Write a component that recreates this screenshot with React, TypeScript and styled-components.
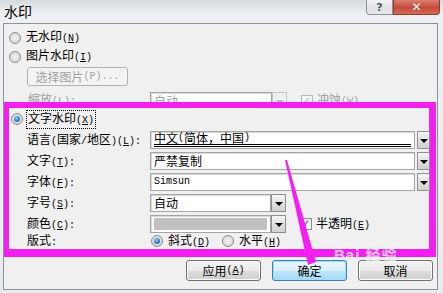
import React from 'react';
import styled, { createGlobalStyle } from 'styled-components';

const GlobalStyle = createGlobalStyle`
  body {
    margin: 0;
    background: #e4e8ec;
    font-family: "Noto Sans CJK SC", "Noto Sans", sans-serif;
  }
`;

const Window = styled.div`
  position: relative;
  width: 443px;
  height: 293px;
  overflow: hidden;
  background: linear-gradient(to bottom, #d6dadf 0px, #eef0f3 14px, #e9ecef 100%);
`;

const TitleBar = styled.div`
  display: flex;
  align-items: flex-start;
  height: 23px;
`;

const Title = styled.div`
  padding: 3px 0 0 4px;
  font-size: 14px;
  line-height: 17px;
  color: #000;
`;

const CaptionButtons = styled.div`
  display: flex;
  margin-left: auto;
  margin-right: 3px;
`;

const CaptionButton = styled.div<{ $close?: boolean }>`
  display: flex;
  align-items: center;
  justify-content: center;
  width: ${p => (p.$close ? 47 : 27)}px;
  height: 15px;
  box-sizing: border-box;
  border: 1px solid ${p => (p.$close ? '#8f3a2e' : '#8e9297')};
  border-top: none;
  border-radius: ${p => (p.$close ? '0 0 4px 0' : '0 0 0 4px')};
  background: ${p =>
    p.$close
      ? 'linear-gradient(to bottom, #d9806e, #c4493a 55%, #d46c58)'
      : 'linear-gradient(to bottom, #f4f5f7, #dfe2e6 55%, #e8eaed)'};
  color: ${p => (p.$close ? '#fff' : '#555')};
  font-family: "DejaVu Sans", sans-serif;
  font-size: ${p => (p.$close ? 12 : 11)}px;
  font-weight: bold;
  line-height: 1;
`;

const Client = styled.div`
  display: flex;
  flex-direction: column;
  box-sizing: border-box;
  height: 267px;
  margin: 0 5px 0 3px;
  border: 1px solid #8e9196;
  background: #f0f0f0;
  padding-top: 4px;
  font-size: 12px;
  line-height: 14px;
  color: #000;
`;

const OptionRow = styled.div<{ $indent?: number; $h?: number }>`
  display: flex;
  align-items: center;
  gap: 4px;
  height: ${p => p.$h ?? 19}px;
  padding-left: ${p => p.$indent ?? 5}px;
`;

const Radio = styled.span<{ $checked?: boolean }>`
  position: relative;
  flex: none;
  width: 12px;
  height: 12px;
  box-sizing: border-box;
  border-radius: 50%;
  border: 1px solid #8b8b8b;
  background: radial-gradient(circle at 50% 50%, #f4f4f4 0, #dadada 70%, #cfcfcf 100%);

  &::after {
    content: '';
    display: ${p => (p.$checked ? 'block' : 'none')};
    position: absolute;
    left: 2px;
    top: 2px;
    width: 6px;
    height: 6px;
    border-radius: 50%;
    background: radial-gradient(circle at 40% 35%, #8fd0f5 0, #1f7cc4 60%, #0e4f8a 100%);
  }
`;

const Check = styled.span<{ $disabled?: boolean }>`
  display: flex;
  align-items: center;
  justify-content: center;
  flex: none;
  width: 12px;
  height: 12px;
  box-sizing: border-box;
  border: 1px solid ${p => (p.$disabled ? '#b8b8b8' : '#8e8f8f')};
  background: ${p => (p.$disabled ? '#f4f4f4' : 'linear-gradient(#e6e6e6, #ffffff)')};
  color: ${p => (p.$disabled ? '#b0b0b0' : '#2a3f8f')};
  font-family: "DejaVu Sans", sans-serif;
  font-size: 10px;
  font-weight: bold;
  line-height: 1;
`;

const Text = styled.span<{ $muted?: boolean; $focus?: boolean; $after?: number }>`
  color: ${p => (p.$muted ? '#a0a0a0' : '#000')};
  white-space: nowrap;
  padding: 0 1px;
  margin-right: ${p => p.$after ?? 0}px;
  outline: ${p => (p.$focus ? '1px dotted #000' : 'none')};
`;

/* half-width run, to get the fixed 6px cell of the dialog font */
const Half = styled.span`
  font-family: "Liberation Mono", monospace;
  font-size: 10px;
`;

const Key = styled.span`
  text-decoration: underline;
`;

const PickButton = styled.div`
  display: flex;
  align-items: center;
  justify-content: center;
  width: 101px;
  height: 19px;
  box-sizing: border-box;
  margin: 1px 0 0 23px;
  border: 1px solid #adb2b5;
  border-radius: 3px;
  background: #f4f4f4;
  color: #a0a0a0;
`;

const ScaleRow = styled.div`
  display: flex;
  align-items: flex-start;
  height: 10px;
  margin-top: 6px;
  padding-left: 23px;
  overflow: hidden;
`;

const Highlight = styled.div`
  display: flex;
  flex-direction: column;
  margin-right: 1px;
  padding-top: 3px;
  border-style: solid;
  border-color: #f21ff0;
  border-width: 6px 7px 8px 5px;
`;

const FieldRows = styled.div`
  display: flex;
  flex-direction: column;
  gap: 3px;
  margin-top: 4px;
`;

const FieldRow = styled.div`
  display: flex;
  align-items: center;
  height: 18px;
  padding-left: 18px;
`;

const Label = styled.span<{ $w?: number }>`
  flex: none;
  width: ${p => p.$w ?? 123}px;
  white-space: nowrap;
`;

const Field = styled.div<{ $w: number; $muted?: boolean; $mono?: boolean }>`
  display: flex;
  align-items: center;
  flex: none;
  width: ${p => p.$w}px;
  height: 18px;
  box-sizing: border-box;
  padding: 0 3px;
  border: 1px solid #a5a5a5;
  box-shadow: inset 1px 1px 0 #d8d8d8;
  background: #fff;
  color: ${p => (p.$muted ? '#a0a0a0' : '#000')};
  font-family: ${p =>
    p.$mono ? '"Liberation Mono", monospace' : '"Noto Sans CJK SC", sans-serif'};
  font-size: ${p => (p.$mono ? 10 : 12)}px;
  white-space: nowrap;
  overflow: hidden;
`;

const Selected = styled.span`
  flex: 1;
  align-self: stretch;
  display: flex;
  align-items: center;
  margin-bottom: 1px;
  border-bottom: 3px double #000;
  line-height: 12px;
`;

const Swatch = styled.span`
  flex: 1;
  height: 12px;
  background: #c0c0c0;
`;

const DropButton = styled.div<{ $w?: number; $gap?: number; $disabled?: boolean }>`
  display: flex;
  align-items: center;
  justify-content: center;
  flex: none;
  width: ${p => p.$w ?? 13}px;
  height: 18px;
  box-sizing: border-box;
  margin-left: ${p => p.$gap ?? 2}px;
  border: 1px solid ${p => (p.$disabled ? '#c4c4c4' : '#8f8f8f')};
  background: ${p =>
    p.$disabled ? '#efefef' : 'linear-gradient(to bottom, #f6f6f6, #dedede 55%, #d2d2d2)'};

  &::after {
    content: '';
    border-left: 4px solid transparent;
    border-right: 4px solid transparent;
    border-top: 4px solid ${p => (p.$disabled ? '#b8b8b8' : '#000')};
    margin-top: 1px;
  }
`;

const Aside = styled.div`
  display: flex;
  align-items: center;
  gap: 3px;
  margin-left: 14px;
`;

const Footer = styled.div`
  display: flex;
  justify-content: flex-end;
  gap: 11px;
  padding: 3px 4px 0 0;
`;

const DialogButton = styled.div<{ $default?: boolean }>`
  display: flex;
  align-items: center;
  justify-content: center;
  width: 75px;
  height: 21px;
  box-sizing: border-box;
  border: 1px solid ${p => (p.$default ? '#3c7fb1' : '#707070')};
  border-radius: 3px;
  background: ${p =>
    p.$default
      ? 'linear-gradient(to bottom, #eaf6fd, #d9f0fc 50%, #bee6fd 51%, #a7d9f5)'
      : 'linear-gradient(to bottom, #f2f2f2, #ebebeb 50%, #dddddd 51%, #cfcfcf)'};
  box-shadow: ${p => (p.$default ? 'inset 0 0 0 1px #9ee0fb' : 'inset 0 0 0 1px #fcfcfc')};
  font-size: 12px;
`;

const Arrow = styled.svg`
  position: absolute;
  left: 0;
  top: 0;
  pointer-events: none;
`;

const Watermark = styled.div`
  position: absolute;
  left: 334px;
  top: 247px;
  color: rgba(255, 255, 255, 0.6);
  text-shadow: 0 0 1px rgba(190, 190, 190, 0.45);
  font-family: "Liberation Sans", "Noto Sans CJK SC", sans-serif;
  font-size: 15px;
  font-weight: bold;
  line-height: 15px;
  letter-spacing: 1px;
  pointer-events: none;
`;

// "&" marks the access key; ASCII runs are set half-width
const label = (s: string) =>
  s
    .split(/([ -~]+)/)
    .filter(Boolean)
    .map((part, i) => {
      if (!/^[ -~]+$/.test(part)) return <React.Fragment key={i}>{part}</React.Fragment>;
      const at = part.indexOf('&');
      if (at < 0) return <Half key={i}>{part}</Half>;
      return (
        <Half key={i}>
          {part.slice(0, at)}
          <Key>{part[at + 1]}</Key>
          {part.slice(at + 2)}
        </Half>
      );
    });

const wideRows = [
  { text: '文字(&T):', value: '严禁复制', mono: false },
  { text: '字体(&F):', value: 'Simsun', mono: true },
];

export default function App() {
  return (
    <Window>
      <GlobalStyle />
      <TitleBar>
        <Title>水印</Title>
        <CaptionButtons>
          <CaptionButton>?</CaptionButton>
          <CaptionButton $close>✕</CaptionButton>
        </CaptionButtons>
      </TitleBar>

      <Client>
        <OptionRow>
          <Radio />
          <Text>{label('无水印(&N)')}</Text>
        </OptionRow>
        <OptionRow>
          <Radio />
          <Text>{label('图片水印(&I)')}</Text>
        </OptionRow>
        <PickButton>{label('选择图片(P)...')}</PickButton>
        <ScaleRow>
          <Label><Text $muted>{label('缩放(L):')}</Text></Label>
          <Field $w={122} $muted>自动</Field>
          <DropButton $w={15} $gap={0} $disabled />
          <Aside>
            <Check $disabled>✓</Check>
            <Text $muted>{label('冲蚀(W)')}</Text>
          </Aside>
        </ScaleRow>

        <Highlight>
          <OptionRow $indent={2} $h={16}>
            <Radio $checked />
            <Text $focus>{label('文字水印(&X)')}</Text>
          </OptionRow>
          <FieldRows>
            <FieldRow>
              <Label>{label('语言(国家/地区)(&L):')}</Label>
              <Field $w={265}><Selected>{label('中文(简体，中国)')}</Selected></Field>
              <DropButton />
            </FieldRow>
            {wideRows.map(r => (
              <FieldRow key={r.text}>
                <Label>{label(r.text)}</Label>
                <Field $w={265} $mono={r.mono}>{r.value}</Field>
                <DropButton />
              </FieldRow>
            ))}
            <FieldRow>
              <Label>{label('字号(&S):')}</Label>
              <Field $w={121}>自动</Field>
              <DropButton $w={15} $gap={0} />
            </FieldRow>
            <FieldRow>
              <Label>{label('颜色(&C):')}</Label>
              <Field $w={121}><Swatch /></Field>
              <DropButton $w={15} $gap={0} />
              <Aside>
                <Check>✓</Check>
                <Text>{label('半透明(&E)')}</Text>
              </Aside>
            </FieldRow>
          </FieldRows>
          <OptionRow $indent={18} $h={16}>
            <Label $w={120}>{label('版式:')}</Label>
            <Radio $checked />
            <Text $after={7}>{label('斜式(&D)')}</Text>
            <Radio />
            <Text>{label('水平(&H)')}</Text>
          </OptionRow>
        </Highlight>

        <Footer>
          <DialogButton>{label('应用(&A)')}</DialogButton>
          <DialogButton $default>确定</DialogButton>
          <DialogButton>取消</DialogButton>
        </Footer>
      </Client>

      <Watermark>Bai 经验</Watermark>

      <Arrow width="443" height="293" viewBox="0 0 443 293">
        <polygon points="285,160 287,160 316,262 308,265" fill="#f21ff0" />
      </Arrow>
    </Window>
  );
}
